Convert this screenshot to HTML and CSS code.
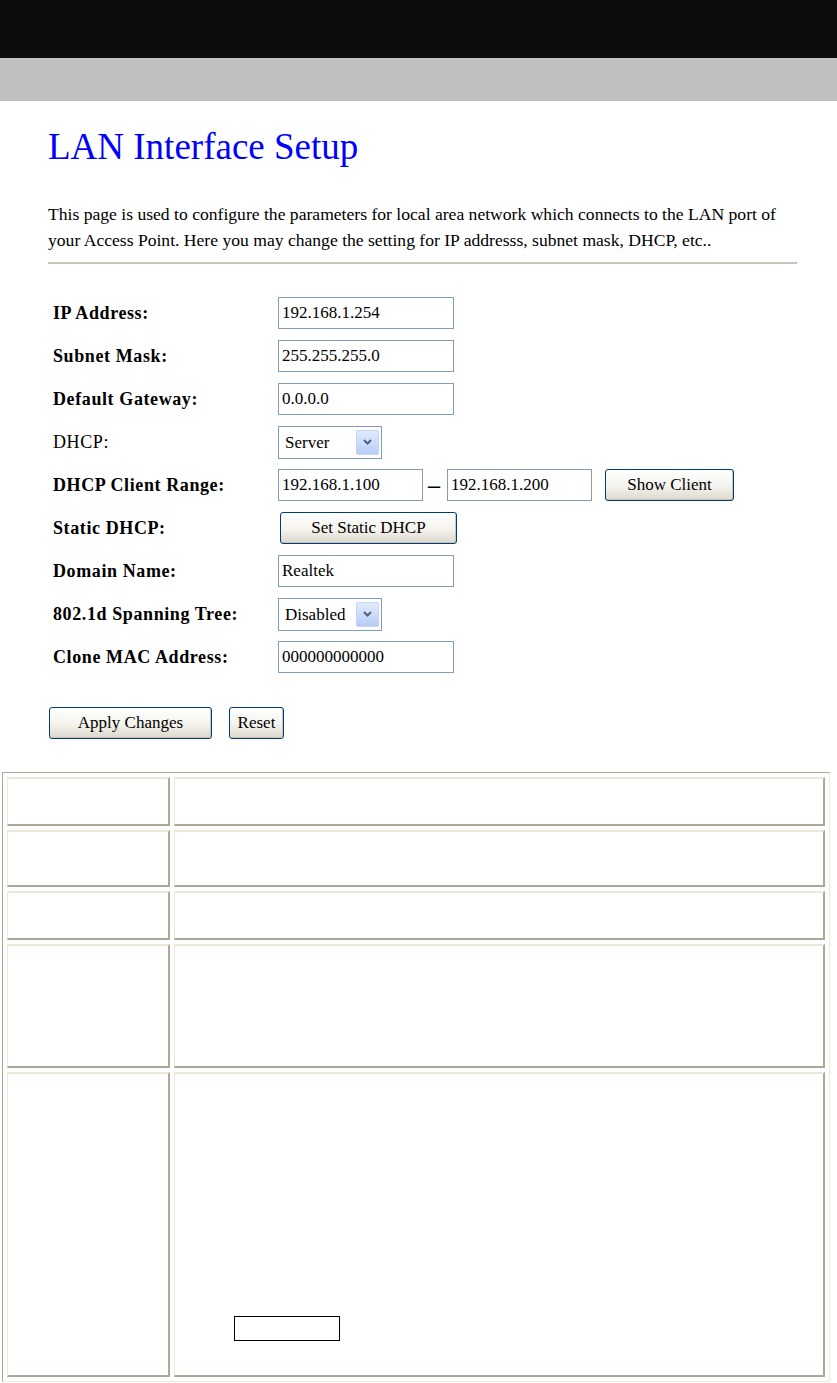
FILE: index.html
```html
<!DOCTYPE html>
<html lang="en">
<head>
    <meta charset="UTF-8">
    <meta name="viewport" content="width=device-width, initial-scale=1.0">
    <title>LAN Interface Setup</title>
    <link rel="stylesheet" href="styles.css">
</head>
<body>
    <div class="topbar"></div>
    <div class="subbar"></div>

    <div class="page">
        <h1 class="title">LAN Interface Setup</h1>
        <p class="intro">This page is used to configure the parameters for local area network which connects to the LAN port of<br>your Access Point. Here you may change the setting for IP addresss, subnet mask, DHCP, etc..</p>
        <hr class="divider">

        <form class="lan-form" id="lanForm">
            <div class="row">
                <label class="field-label" for="ip">IP Address:</label>
                <input class="text-input" type="text" id="ip" value="192.168.1.254">
            </div>
            <div class="row">
                <label class="field-label" for="mask">Subnet Mask:</label>
                <input class="text-input" type="text" id="mask" value="255.255.255.0">
            </div>
            <div class="row">
                <label class="field-label" for="gateway">Default Gateway:</label>
                <input class="text-input" type="text" id="gateway" value="0.0.0.0">
            </div>
            <div class="row">
                <label class="field-label plain" for="dhcp">DHCP:</label>
                <div class="select-box">
                    <select id="dhcp">
                        <option>Server</option>
                        <option>Client</option>
                        <option>Disabled</option>
                    </select>
                    <span class="select-arrow">
                        <svg width="9" height="6" viewBox="0 0 9 6"><path d="M1 1l3.5 3.5L8 1" fill="none" stroke="#4d6185" stroke-width="2"/></svg>
                    </span>
                </div>
            </div>
            <div class="row">
                <label class="field-label" for="rangeStart">DHCP Client Range:</label>
                <input class="text-input range-input" type="text" id="rangeStart" value="192.168.1.100">
                <span class="range-dash">–</span>
                <input class="text-input range-input" type="text" id="rangeEnd" value="192.168.1.200">
                <button type="button" class="btn btn-show">Show Client</button>
            </div>
            <div class="row">
                <label class="field-label">Static DHCP:</label>
                <button type="button" class="btn btn-static">Set Static DHCP</button>
            </div>
            <div class="row">
                <label class="field-label" for="domain">Domain Name:</label>
                <input class="text-input" type="text" id="domain" value="Realtek">
            </div>
            <div class="row">
                <label class="field-label" for="stp">802.1d Spanning Tree:</label>
                <div class="select-box">
                    <select id="stp">
                        <option>Disabled</option>
                        <option>Enabled</option>
                    </select>
                    <span class="select-arrow">
                        <svg width="9" height="6" viewBox="0 0 9 6"><path d="M1 1l3.5 3.5L8 1" fill="none" stroke="#4d6185" stroke-width="2"/></svg>
                    </span>
                </div>
            </div>
            <div class="row">
                <label class="field-label" for="mac">Clone MAC Address:</label>
                <input class="text-input" type="text" id="mac" value="000000000000">
            </div>

            <div class="actions">
                <button type="submit" class="btn btn-apply">Apply Changes</button>
                <button type="reset" class="btn btn-reset">Reset</button>
            </div>
        </form>
    </div>

    <table class="help-table">
        <tr class="row-sm"><td class="help-key"></td><td class="help-value"></td></tr>
        <tr class="row-md"><td class="help-key"></td><td class="help-value"></td></tr>
        <tr class="row-sm"><td class="help-key"></td><td class="help-value"></td></tr>
        <tr class="row-lg"><td class="help-key"></td><td class="help-value"></td></tr>
        <tr class="row-xl">
            <td class="help-key"></td>
            <td class="help-value bottom">
                <div class="range-box"></div>
            </td>
        </tr>
    </table>

    <script>
        // Keep the form on the page
        document.getElementById('lanForm').addEventListener('submit', function(e) {
            e.preventDefault();
        });
    </script>
</body>
</html>
```

FILE: styles.css
```css
body {
    margin: 0;
    font-family: "Liberation Serif", "Times New Roman", serif;
    color: #000;
    background: #fff;
}

.topbar {
    height: 58px;
    background: #0d0d0d;
}

.subbar {
    height: 43px;
    background: #c0c0c0;
}

.page {
    width: 749px;
    padding-left: 48px;
}

.title {
    margin: 24px 0 0;
    font-size: 37px;
    line-height: 44px;
    font-weight: normal;
    color: #0000ff;
}

.intro {
    margin: 32px 0 0;
    font-size: 17.6px;
    line-height: 26px;
}

.divider {
    margin: 9px 0 0;
    height: 2px;
    border: 0;
    background: #c8c5b8;
}

.lan-form {
    display: flex;
    flex-direction: column;
    gap: 11px;
    margin-top: 33px;
}

.row {
    display: flex;
    align-items: center;
    height: 32px;
}

.field-label {
    width: 230px;
    box-sizing: border-box;
    padding-left: 5px;
    font-size: 18px;
    font-weight: bold;
    letter-spacing: 0.6px;
}

.field-label.plain {
    font-weight: normal;
}

.text-input {
    width: 176px;
    height: 32px;
    box-sizing: border-box;
    margin: 0;
    padding: 0 3px;
    border: 1px solid #7f9db9;
    font-family: inherit;
    font-size: 17px;
    color: #000;
    background: #fff;
    outline: none;
}

.range-input {
    width: 145px;
}

.range-dash {
    width: 12px;
    margin: 0 7px 0 5px;
    font-size: 24px;
    font-weight: bold;
    line-height: 1;
    text-align: center;
}

.select-box {
    display: flex;
    align-items: center;
    width: 104px;
    height: 33px;
    box-sizing: border-box;
    padding: 2px;
    border: 1px solid #7f9db9;
    background: #fff;
}

.select-box select {
    flex: 1;
    min-width: 0;
    height: 100%;
    padding: 0 0 0 4px;
    border: 0;
    background: transparent;
    font-family: inherit;
    font-size: 17px;
    color: #000;
    appearance: none;
    outline: none;
}

.select-arrow {
    display: flex;
    align-items: center;
    justify-content: center;
    width: 23px;
    height: 25px;
    box-sizing: border-box;
    border: 1px solid #c3d3fd;
    border-radius: 2px;
    background: linear-gradient(#e3ecfe, #b8ccf6);
}

.btn {
    height: 32px;
    padding: 0;
    border: 1px solid #003c74;
    border-radius: 3px;
    background: linear-gradient(#ffffff, #f4f3ee 55%, #dcd7cb);
    box-shadow: inset -1px -1px 0 #cbc6b9;
    font-family: inherit;
    font-size: 17px;
    color: #000;
    cursor: pointer;
}

.btn-show {
    width: 129px;
    margin-left: 13px;
}

.btn-static {
    width: 177px;
    margin-left: 2px;
}

.actions {
    display: flex;
    gap: 17px;
    margin-top: 23px;
    margin-left: 1px;
}

.btn-apply {
    width: 163px;
}

.btn-reset {
    width: 55px;
}

.help-table {
    width: 828px;
    margin: 33px 0 0 2px;
    border-collapse: separate;
    border-spacing: 4px;
    border: 1px solid;
    border-color: #aca899 #ece9d8 #ece9d8 #aca899;
}

.help-table td {
    padding: 0;
    border-style: solid;
    border-width: 2px 2px 2px 1px;
    border-color: #ece9d8 #aca899 #aca899 #ece9d8;
}

.help-key {
    width: 160px;
}

.row-sm {
    height: 49px;
}

.row-md {
    height: 57px;
}

.row-lg {
    height: 124px;
}

.row-xl {
    height: 305px;
}

.help-value.bottom {
    vertical-align: bottom;
    padding-bottom: 34px;
}

.range-box {
    width: 104px;
    height: 23px;
    margin-left: 59px;
    border: 1px solid #000;
}
```
